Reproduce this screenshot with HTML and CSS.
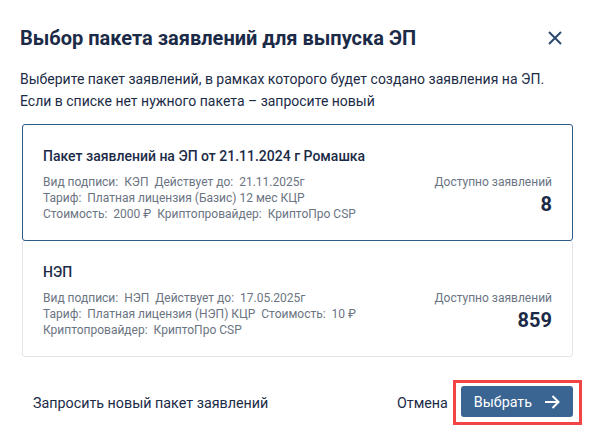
FILE: index.html
```html
<!DOCTYPE html>
<html>
<head>
  <meta charset="utf-8">
  <title>Выбор пакета заявлений</title>
  <link rel="stylesheet" href="styles.css">
</head>
<body>
  <div class="modal">
    <div class="modal-header">
      <h1 class="modal-title">Выбор пакета заявлений для выпуска ЭП</h1>
      <button class="close-button" title="Закрыть">
        <svg width="16" height="16" viewBox="0 0 16 16"><path d="M2 2L14 14M14 2L2 14" stroke="#2b4a70" stroke-width="2" fill="none"/></svg>
      </button>
    </div>
    <p class="modal-text">Выберите пакет заявлений, в рамках которого будет создано заявления на ЭП.<br>Если в списке нет нужного пакета – запросите новый</p>

    <div class="package-list">
      <div class="package selected">
        <div class="package-info">
          <div class="package-name">Пакет заявлений на ЭП от 21.11.2024 г Ромашка</div>
          <div class="package-details">
            Вид подписи:&nbsp; КЭП&nbsp; Действует до:&nbsp; 21.11.2025г<br>
            Тариф:&nbsp; Платная лицензия (Базис) 12 мес КЦР<br>
            Стоимость:&nbsp; 2000 ₽&nbsp; Криптопровайдер:&nbsp; КриптоПро CSP
          </div>
        </div>
        <div class="package-count">
          <div class="count-label">Доступно заявлений</div>
          <div class="count-value">8</div>
        </div>
      </div>
      <div class="package">
        <div class="package-info">
          <div class="package-name">НЭП</div>
          <div class="package-details">
            Вид подписи:&nbsp; НЭП&nbsp; Действует до:&nbsp; 17.05.2025г<br>
            Тариф:&nbsp; Платная лицензия (НЭП) КЦР&nbsp; Стоимость:&nbsp; 10 ₽<br>
            Криптопровайдер:&nbsp; КриптоПро CSP
          </div>
        </div>
        <div class="package-count">
          <div class="count-label">Доступно заявлений</div>
          <div class="count-value">859</div>
        </div>
      </div>
    </div>

    <div class="modal-footer">
      <button class="link-button">Запросить новый пакет заявлений</button>
      <div class="footer-actions">
        <button class="cancel-button">Отмена</button>
        <span class="highlight">
          <button class="primary-button">Выбрать
            <svg width="16" height="16" viewBox="0 0 16 16"><path d="M1 8H14.5M8.5 2L14.5 8L8.5 14" stroke="#fff" stroke-width="2" fill="none"/></svg>
          </button>
        </span>
      </div>
    </div>
  </div>
</body>
</html>
```

FILE: styles.css
```css
body {
  margin: 0;
  background: #fff;
  font-family: Roboto, "Noto Sans", sans-serif;
  color: #1b2b47;
}
button {
  font-family: inherit;
  background: none;
  border: none;
  padding: 0;
  cursor: pointer;
}
.modal {
  padding: 26px 20px 0 20px;
}
.modal-header {
  display: flex;
  justify-content: space-between;
  align-items: center;
}
.modal-title {
  margin: 0;
  font-size: 20px;
  line-height: 24px;
  font-weight: 700;
}
.close-button {
  display: flex;
  margin-right: 10px;
}
.modal-text {
  margin: 18px 0 0 0;
  font-size: 14px;
  line-height: 22px;
}
.package-list {
  margin: 12px 0 0 2px;
}
.package {
  display: flex;
  justify-content: space-between;
  align-items: flex-start;
  padding: 20px 20px 18px 20px;
  border: 1px solid #e1e4e8;
  border-radius: 3px;
}
.package + .package {
  margin-top: -1px;
}
.package.selected {
  position: relative;
  border-color: #2e5a8a;
}
.package-name {
  font-size: 14px;
  line-height: 22px;
  font-weight: 500;
}
.package-details {
  margin-top: 7px;
  font-size: 12px;
  line-height: 16px;
  color: #6b7482;
}
.package-count {
  margin-top: 29px;
  text-align: right;
}
.count-label {
  font-size: 12px;
  line-height: 16px;
  color: #6b7482;
}
.count-value {
  margin-top: 2px;
  font-size: 20px;
  line-height: 24px;
  font-weight: 700;
}
.modal-footer {
  display: flex;
  justify-content: space-between;
  align-items: center;
  margin-top: 23px;
  padding-left: 13px;
}
.link-button {
  font-size: 14.3px;
  color: #1b2b47;
}
.footer-actions {
  display: flex;
  align-items: center;
}
.cancel-button {
  font-size: 14.3px;
  color: #1b2b47;
  margin-right: 5px;
}
.highlight {
  display: flex;
  padding: 3px 6px 5px 5px;
  border: 3px solid #f24444;
  margin-right: -9px;
}
.primary-button {
  display: flex;
  align-items: center;
  gap: 12px;
  height: 31px;
  padding: 0 13px 0 13px;
  background: #3a6593;
  color: #fff;
  font-size: 14.3px;
  border-radius: 3px;
}
```
